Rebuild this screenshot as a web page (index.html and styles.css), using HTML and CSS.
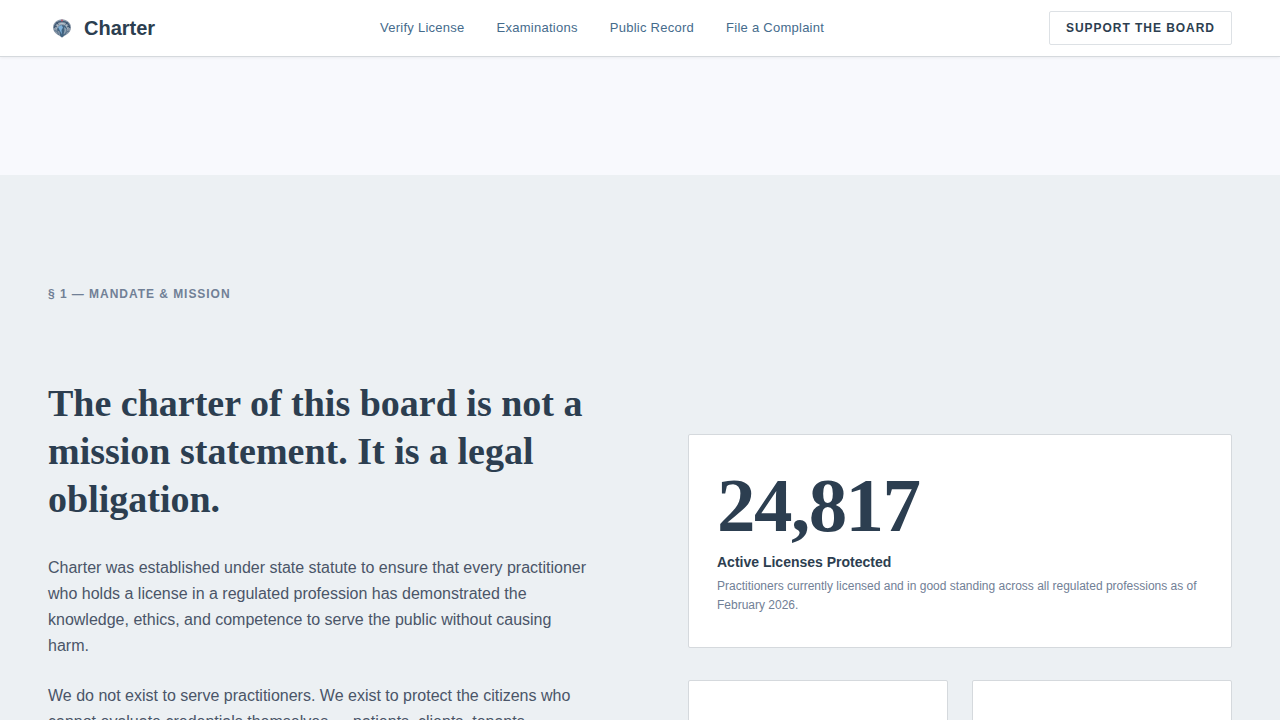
FILE: index.html
```html
<!DOCTYPE html>
<html lang="en">

<head>
    <meta charset="UTF-8">
    <meta name="viewport" content="width=device-width, initial-scale=1.0">
    <title>Charter</title>
    <link rel="stylesheet" href="styles.css">
</head>

<body>
    <header class="site-header">
        <a class="brand" href="#">
            <svg class="brand-mark" viewBox="0 0 28 28" aria-hidden="true">
                <path d="M5 13.5C5 9 9 5.300 14 5.300s9 3.700 9 8.200c0 3-1.500 5-3.500 6.500L14 23.500l-5.500-3.500C6.500 18.500 5 16.500 5 13.500z" fill="#8b99a9" />
                <path d="M6.300 14C6.800 9.500 10 7.300 14 7.300s7.200 2.200 7.700 6.700" fill="none" stroke="#405a76" stroke-width="1.200" />
                <path d="M8.500 14.500c.3-3.200 2.500-5 5.500-5s5.200 1.800 5.500 5" fill="none" stroke="#b8c6d0" stroke-width="1" />
                <path d="M6.500 12l2.500 1M8.500 8.500l2 2M19.500 8.500l-2 2M21.500 12l-2.500 1" stroke="#3a526c" stroke-width="1" />
                <path d="M9.500 14l3.500-3 4 .5 2 3-1 5-4 4-2-2-.5-4-2.500-1z" fill="#416380" />
                <path d="M10 13l3.500-2 1.500 2.500-1.500 2.500.5 4.500-2.200-4z" fill="#7fb1da" />
                <path d="M16 13l2.500 2-1 4-2 1.500 1-4z" fill="#91a3b2" />
                <path d="M6.500 16.500l3 1 1 3.500M21 17l-2.500 1-1.500 3" fill="none" stroke="#58728a" stroke-width="1" />
                <circle cx="14" cy="6.500" r="1" fill="#b95d71" />
            </svg>
            <span>Charter</span>
        </a>
        <nav class="main-nav">
            <a href="#">Verify License</a>
            <a href="#">Examinations</a>
            <a href="#">Public Record</a>
            <a href="#">File a Complaint</a>
        </nav>
        <button class="support-button" type="button">Support the Board</button>
    </header>
    <main>
        <div class="intro"></div>

        <!-- Mandate & mission -->
        <section class="mandate">
            <p class="section-label">§ 1 — Mandate &amp; Mission</p>
            <div class="mandate-grid">
                <div class="mandate-text">
                    <h2>The charter of this board is not a mission statement. It is a legal obligation.</h2>
                    <p>Charter was established under state statute to ensure that every practitioner who holds a license in a regulated profession has demonstrated the knowledge, ethics, and competence to serve the public without causing harm.</p>
                    <p>We do not exist to serve practitioners. We exist to protect the citizens who cannot evaluate credentials themselves — patients, clients, tenants.</p>
                </div>
                <div class="stats">
                    <div class="stat-card stat-card-wide">
                        <div class="stat-number">24,817</div>
                        <h3>Active Licenses Protected</h3>
                        <p>Practitioners currently licensed and in good standing across all regulated professions as of February 2026.</p>
                    </div>
                    <div class="stat-card"></div>
                    <div class="stat-card"></div>
                </div>
            </div>
        </section>
    </main>
</body>

</html>
```
FILE: styles.css
```css
* {
    box-sizing: border-box;
}

body {
    margin: 0;
    font-family: "Liberation Sans", Arial, sans-serif;
    font-size: 16px;
    line-height: 26px;
    color: #4a5568;
    background-color: #f7fafc;
}

h2,
h3,
p {
    margin: 0;
}

.site-header {
    position: sticky;
    top: 0;
    display: flex;
    align-items: center;
    justify-content: space-between;
    padding: 11px 48px;
    background-color: #ffffff;
    border-bottom: 1px solid #d5d9dd;
    box-shadow: 0 1px 3px rgba(0, 0, 0, 0.06);
}

.brand {
    display: flex;
    align-items: center;
    gap: 8px;
    font-size: 20px;
    font-weight: bold;
    color: #2c3e50;
    text-decoration: none;
}

.brand-mark {
    width: 28px;
    height: 28px;
}

.main-nav {
    display: flex;
    gap: 32px;
}

.main-nav a {
    font-size: 13px;
    letter-spacing: 0.02em;
    color: #456b8c;
    text-decoration: none;
}

.support-button {
    padding: 0 16px;
    font-family: inherit;
    font-size: 12px;
    font-weight: bold;
    line-height: 32px;
    letter-spacing: 0.08em;
    text-transform: uppercase;
    color: #2c3e50;
    background-color: #ffffff;
    border: 1px solid #dde1e5;
    border-radius: 2px;
    cursor: pointer;
}

.intro {
    height: 118px;
    background-color: #f8f9fd;
}

.mandate {
    padding: 106px 48px 96px;
    background-color: #ecf0f3;
}

.section-label {
    margin-bottom: 72px;
    font-size: 12px;
    font-weight: bold;
    letter-spacing: 0.08em;
    text-transform: uppercase;
    color: #718096;
}

.mandate-grid {
    display: grid;
    grid-template-columns: 1fr 1fr;
    align-items: center;
    gap: 96px;
}

.mandate-text {
    align-self: start;
}

.mandate-text h2 {
    margin-bottom: 32px;
    font-family: "Liberation Serif", "Times New Roman", serif;
    font-size: 38px;
    line-height: 48px;
    color: #2c3e50;
}

.mandate-text p {
    margin-bottom: 24px;
}

.stats {
    display: grid;
    grid-template-columns: 1fr 1fr;
    gap: 32px 24px;
    padding-top: 55px;
}

.stat-card {
    min-height: 180px;
    padding: 32px 28px;
    background-color: #ffffff;
    border: 1px solid #d5d9dd;
    border-radius: 2px;
}

.stat-card-wide {
    grid-column: 1 / -1;
}

.stat-number {
    margin-bottom: 8px;
    font-family: "Liberation Serif", "Times New Roman", serif;
    font-size: 77px;
    font-weight: bold;
    line-height: 76px;
    letter-spacing: -0.02em;
    color: #2c3e50;
}

.stat-card h3 {
    margin-bottom: 4px;
    font-size: 14px;
    line-height: 22px;
    color: #2c3e50;
}

.stat-card p {
    font-size: 12px;
    line-height: 19px;
    color: #718096;
}
```
